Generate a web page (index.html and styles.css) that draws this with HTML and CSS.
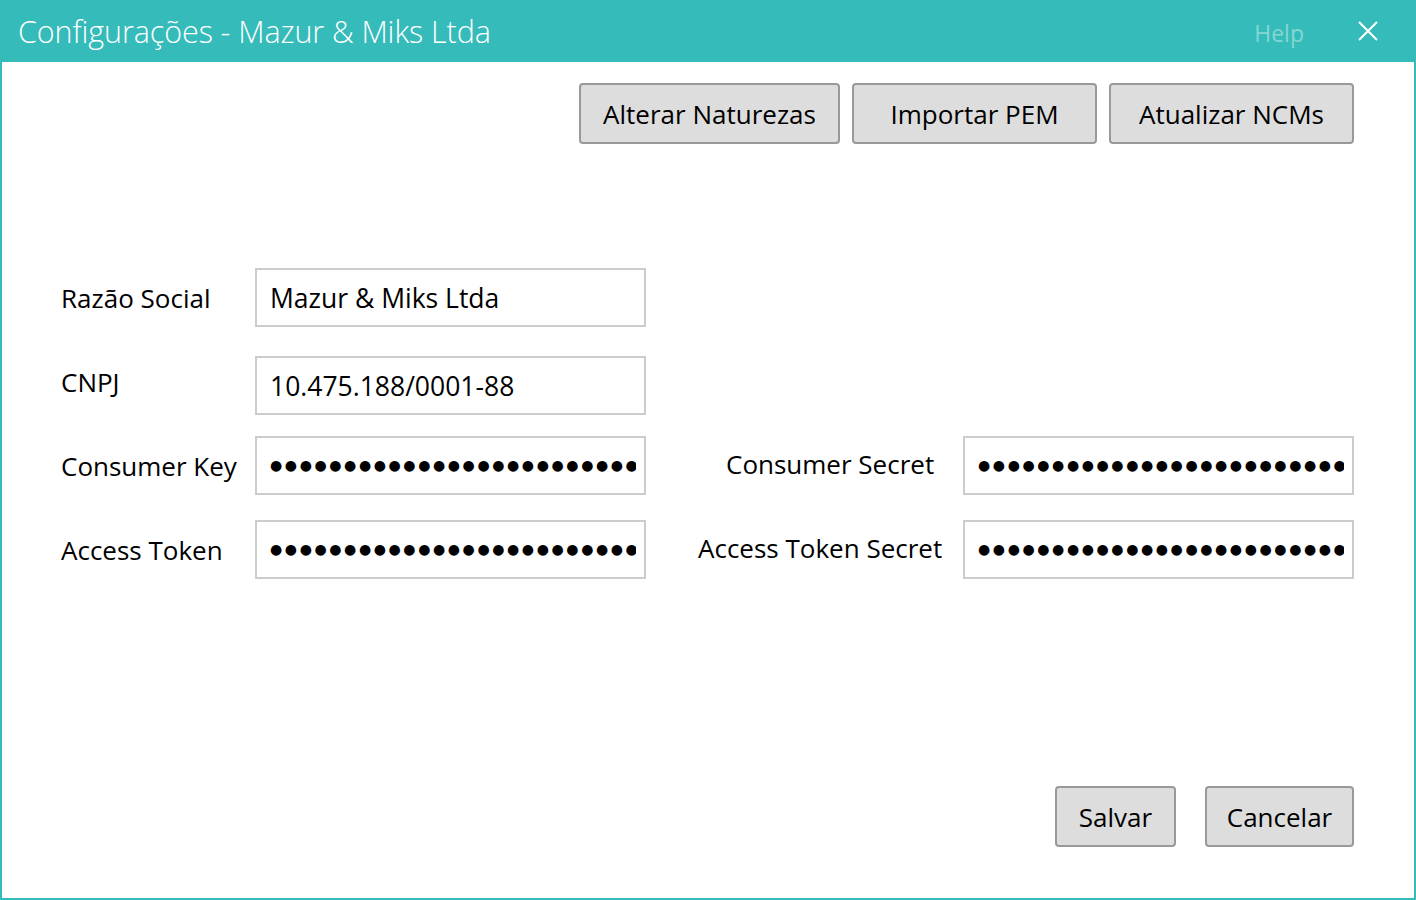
FILE: index.html
```html
<!DOCTYPE html>
<html lang="pt">
<head>
<meta charset="utf-8">
<title>Configurações - Mazur &amp; Miks Ltda</title>
<link rel="stylesheet" href="styles.css">
</head>
<body>
<div class="window">
  <header class="titlebar">
    <div class="title">Configurações - Mazur &amp; Miks Ltda</div>
    <div class="title-actions">
      <span class="help">Help</span>
      <span class="close" aria-label="Fechar">
        <svg width="20" height="20" viewBox="0 0 20 20"><path d="M1 1 L19 19 M19 1 L1 19" stroke="#ffffff" stroke-width="2" fill="none"/></svg>
      </span>
    </div>
  </header>
  <main class="content">
    <div class="toolbar">
      <button class="btn btn-wide">Alterar Naturezas</button>
      <button class="btn btn-mid">Importar PEM</button>
      <button class="btn btn-mid">Atualizar NCMs</button>
    </div>
    <div class="form">
      <div class="row row-1">
        <label class="label">Razão Social</label>
        <div class="field">Mazur &amp; Miks Ltda</div>
      </div>
      <div class="row row-2">
        <label class="label label-high">CNPJ</label>
        <div class="field">10.475.188/0001-88</div>
      </div>
      <div class="row row-3">
        <label class="label">Consumer Key</label>
        <div class="field field-pass"><span class="dots">●●●●●●●●●●●●●●●●●●●●●●●●●●●●</span></div>
        <label class="label label2 label-cs">Consumer Secret</label>
        <div class="field field-pass"><span class="dots">●●●●●●●●●●●●●●●●●●●●●●●●●●●●</span></div>
      </div>
      <div class="row row-4">
        <label class="label">Access Token</label>
        <div class="field field-pass"><span class="dots">●●●●●●●●●●●●●●●●●●●●●●●●●●●●</span></div>
        <label class="label label2 label-ats">Access Token Secret</label>
        <div class="field field-pass"><span class="dots">●●●●●●●●●●●●●●●●●●●●●●●●●●●●</span></div>
      </div>
    </div>
    <div class="footer">
      <button class="btn btn-save">Salvar</button>
      <button class="btn btn-cancel">Cancelar</button>
    </div>
  </main>
</div>
</body>
</html>
```
FILE: styles.css
```css
* { box-sizing: border-box; }
html, body { margin: 0; padding: 0; background: #ffffff; }
body { width: 1416px; height: 900px; overflow: hidden; font-family: "Open Sans", "Noto Sans", sans-serif; color: #000; }

.window {
  width: 1416px;
  height: 900px;
  display: flex;
  flex-direction: column;
  border: 2px solid #35bbba;
  border-top: none;
  background: #fff;
}

.titlebar {
  height: 62px;
  margin: 0 -2px;
  background: #35bbba;
  display: flex;
  align-items: center;
  justify-content: space-between;
  padding: 0 38px 0 18px;
}
.title {
  color: #ffffff;
  font-weight: 300;
  font-size: 30.5px;
  letter-spacing: -0.1px;
}
.title-actions { display: flex; align-items: center; gap: 54px; }
.help { color: #86d6d3; font-size: 23px; font-weight: 400; margin-top: 3px; }
.close { display: flex; width: 20px; height: 20px; }

.content {
  flex: 1;
  display: flex;
  flex-direction: column;
  padding: 21px 60px 51px 59px;
}

.toolbar { display: flex; justify-content: flex-end; gap: 12px; }

.btn {
  font-family: "Open Sans", "Noto Sans", sans-serif;
  font-size: 26px;
  color: #000;
  background: #dddddd;
  border: 2px solid #999999;
  border-radius: 4px;
  height: 61px;
  padding: 0;
}
.btn-wide { width: 261px; }
.btn-mid { width: 245px; }
.btn-save { width: 121px; }
.btn-cancel { width: 149px; }

.form { margin-top: 124px; display: flex; flex-direction: column; }
.row { display: flex; align-items: center; height: 59px; }
.row-2 { margin-top: 29px; }
.row-3 { margin-top: 21px; }
.row-4 { margin-top: 25px; }

.label {
  width: 194px;
  font-size: 26px;
  flex-shrink: 0;
  white-space: nowrap;
}
.label-high { margin-top: -8px; }
.label2 { width: 317px; }
.label-cs { padding-left: 80px; margin-top: -4px; }
.label-ats { padding-left: 52px; margin-top: -4px; }

.field {
  width: 391px;
  height: 59px;
  border: 2px solid #cccccc;
  background: #fff;
  padding: 0 0 0 13px;
  display: flex;
  align-items: center;
  font-size: 26.5px;
  overflow: hidden;
  white-space: nowrap;
  flex-shrink: 0;
}
.field-pass { padding-right: 8px; }
.dots {
  font-family: "DejaVu Sans", sans-serif;
  font-size: 14px;
  letter-spacing: 2.6px;
  display: block;
  overflow: hidden;
  width: 100%;
  margin-top: -1px;
}

.footer {
  margin-top: auto;
  display: flex;
  justify-content: flex-end;
  gap: 29px;
}
```
